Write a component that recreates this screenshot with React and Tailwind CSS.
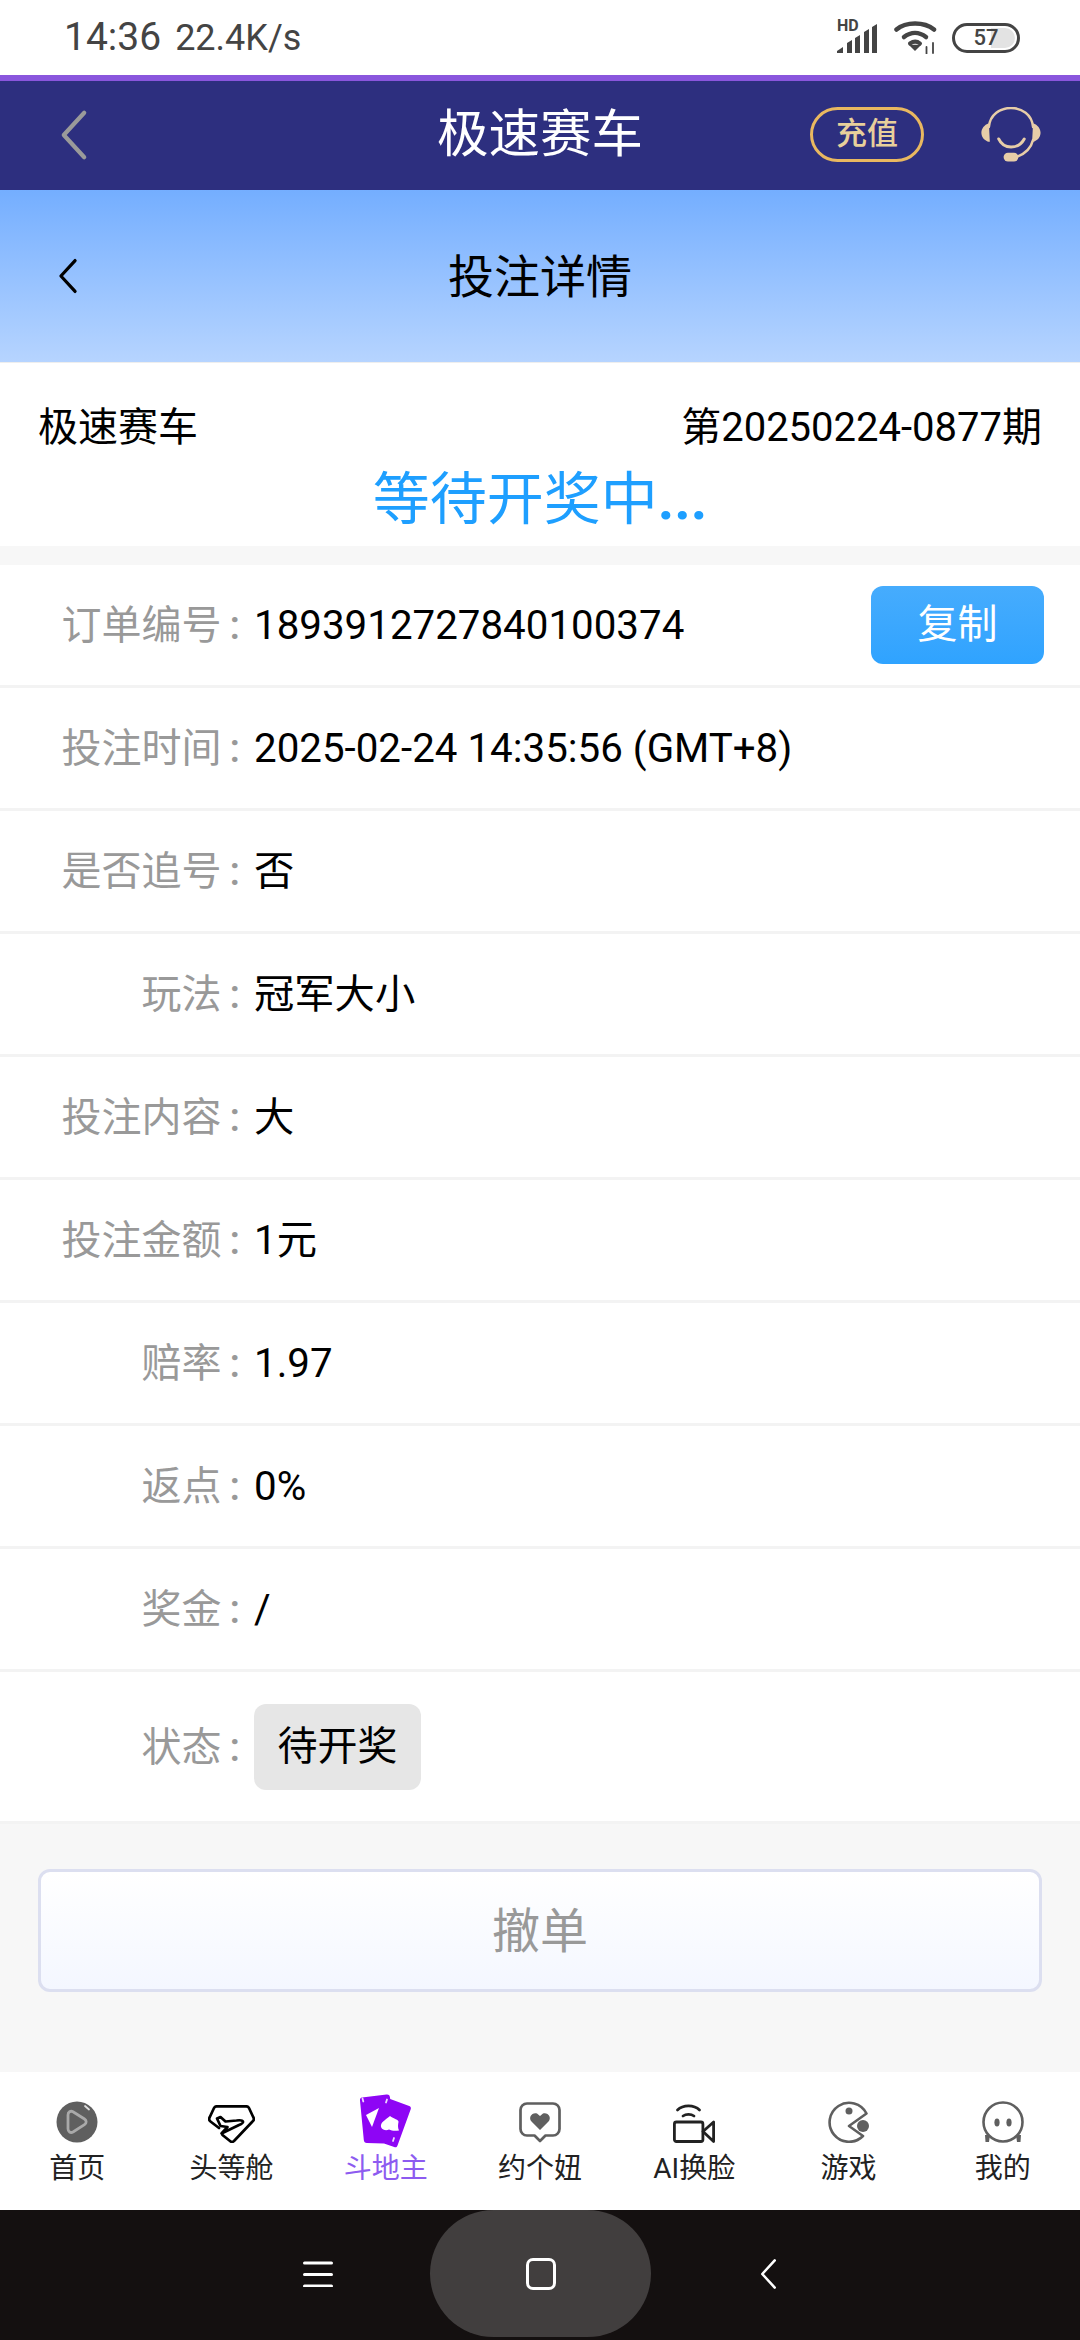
const CJK = "font-['Roboto','Noto_Sans_CJK_SC',sans-serif]";

const rows = [
  ['订单编号', '1893912727840100374', true],
  ['投注时间', '2025-02-24 14:35:56 (GMT+8)'],
  ['是否追号', '否'],
  ['玩法', '冠军大小'],
  ['投注内容', '大'],
  ['投注金额', '1元'],
  ['赔率', '1.97'],
  ['返点', '0%'],
  ['奖金', '/'],
];

function Chevron({ className, stroke, width = 5 }) {
  return (
    <svg viewBox="0 0 30 56" className={className} fill="none" stroke={stroke} strokeWidth={width} strokeLinecap="round" strokeLinejoin="round">
      <path d="M26 4 4 28l22 24" />
    </svg>
  );
}

function Label({ text }) {
  return (
    <div className="w-[240px] shrink-0 pt-[2px] text-right text-[40px] text-[#999999]">
      {text}
      <span className="ml-[8px] font-medium">:</span>
    </div>
  );
}

function Row({ label, value, copy }) {
  return (
    <div className="flex h-[123px] items-center border-b-[3px] border-[#f3f3f3] bg-white">
      <Label text={label} />
      <div className="ml-[14px] flex-1 pt-[2px] text-[40.3px] text-black">{value}</div>
      {copy && (
        <div className="mr-[36px] flex h-[78px] w-[173px] items-center justify-center rounded-xl bg-gradient-to-b from-[#46acfd] to-[#2fa3ff] text-[40px] text-white">复制</div>
      )}
    </div>
  );
}

const TabIcons = {
  home: (
    <svg viewBox="0 0 42 42" className="h-[42px] w-[42px]">
      <circle cx="21" cy="21" r="20.5" fill="#5f5f5f" />
      <path d="M12 14c0-3 2.500-4.500 5-3.300l11.500 7.300c2.200 1.400 2.200 4.200 0 5.600L17 31c-2.500 1.300-5-.3-5-3.300z" fill="none" stroke="#a9a9a9" strokeWidth="2.800" />
      <path d="M29 5l4 3.500" stroke="#e0e0e0" strokeWidth="1.800" strokeLinecap="round" />
    </svg>
  ),
  plane: (
    <svg viewBox="0 0 47 38" className="h-[38px] w-[47px]" fill="none" stroke="#000" strokeWidth="2.700" strokeLinejoin="round" strokeLinecap="round">
      <path d="M11 23 2.500 16.500c-1.500-1.200-1.700-2.800-.8-4.200L6 3c.6-1.200 1.400-1.700 2.700-1.700h29.600c1.300 0 2.100.5 2.700 1.700l4.300 9.300c.9 1.400.7 3-.8 4.200L26 36c-1.400 1.300-2.600 1.300-4 0l-7.500-6" />
      <path d="M9 13.500l3.500-1.500 5 4.500 11-1c3.500-.5 6-.3 6.500 1s-1.500 2.500-4.500 3.700l-17 8.300 6-6.500-7-1z" fill="#fff" />
    </svg>
  ),
  cards: (
    <svg viewBox="0 0 53 54" className="h-[54px] w-[53px]">
      <path d="M3 3.500 27.500.6c2-.2 3 .6 3.400 2.400l.3 2 19 7c1.500.6 2 1.700 1.500 3.200L38.500 51.500c-.6 1.700-1.800 2.200-3.300 1.600L25 49.500 8 49c-2 0-3-1-3.200-3L1 6.500C.8 4.700 1.500 3.700 3 3.500z" fill="#8e05f5" />
      <path d="M7 21 20 14l-7 19z" fill="#fff" />
      <path d="M31 22c-3 3-8 5-9 9-.8 4 4 6.500 8 4.500 3 1.500 6 1.500 10 1-1.500-3-1-6-.5-8.500.5-2.500-5-3-8.500-6z" fill="#fff" />
      <path d="M3.500 4.500l.8 3M28 5.500l-1 3M35 44l-1 3" stroke="#fff" strokeWidth="1.800" strokeLinecap="round" opacity=".85" />
    </svg>
  ),
  heart: (
    <svg viewBox="0 0 42 41" className="h-[41px] w-[42px]" fill="none">
      <path d="M8 1.500h26A6.500 6.500 0 0 1 40.500 8v19a6.500 6.500 0 0 1-6.500 6.500h-7.500L21 39l-5.500-5.500H8A6.500 6.500 0 0 1 1.500 27V8A6.500 6.500 0 0 1 8 1.500z" stroke="#5f5f5f" strokeWidth="2.700" strokeLinejoin="round" />
      <path d="M21 28 12.500 19.500c-3.500-4 .5-9.500 5.500-8l3 2.500 3-2.500c5-1.500 9 4 5.500 8z" fill="#5f5f5f" />
    </svg>
  ),
  faceswap: (
    <svg viewBox="0 0 42 39" className="h-[39px] w-[42px]" fill="none" stroke="#222" strokeWidth="2.800" strokeLinecap="round" strokeLinejoin="round">
      <path d="M4.500 6C10 .5 21 .5 26.500 6" />
      <path d="M10 12c3-2.300 8-2.300 11 0" />
      <rect x="1.400" y="18" width="28.500" height="19.500" rx="2" />
      <path d="M30 27.500 40.600 18v19.500z" />
    </svg>
  ),
  game: (
    <svg viewBox="0 0 42 42" className="h-[42px] w-[42px]">
      <path d="M38.500 12.500A19.500 19.500 0 1 0 35 35L21 25z" fill="none" stroke="#5f5f5f" strokeWidth="2.600" strokeLinejoin="round" />
      <circle cx="21" cy="10" r="3.500" fill="#5f5f5f" />
      <circle cx="35" cy="25" r="6" fill="#5f5f5f" />
    </svg>
  ),
  me: (
    <svg viewBox="0 0 42 42" className="h-[42px] w-[42px]">
      <circle cx="21" cy="21" r="19.500" fill="none" stroke="#5f5f5f" strokeWidth="2.600" />
      <ellipse cx="15" cy="21.500" rx="2.600" ry="4" fill="#5f5f5f" />
      <ellipse cx="27" cy="21.500" rx="2.600" ry="4" fill="#5f5f5f" />
      <path d="M3 34h5l-1 7H3.500zM34 34h5l-.5 7H35z" fill="#5f5f5f" />
    </svg>
  ),
};

const tabs = [
  ['首页', 'home'],
  ['头等舱', 'plane'],
  ['斗地主', 'cards', true],
  ['约个妞', 'heart'],
  ['AI换脸', 'faceswap'],
  ['游戏', 'game'],
  ['我的', 'me'],
];

export default function App() {
  return (
    <div className={`flex h-[2340px] w-[1080px] flex-col overflow-hidden bg-[#f7f7f7] ${CJK}`}>
      {/* status bar */}
      <div className="flex h-[75px] items-center justify-between bg-white pl-[64px] pr-[60px]">
        <div className="flex items-baseline text-[#444444]">
          <span className="text-[39px]">14:36</span>
          <span className="ml-[14px] text-[36px]">22.4K/s</span>
        </div>
        <div className="flex items-center">
          <div className="relative h-[33px] w-[41px]">
            <span className="absolute left-0 top-[-3px] text-[16px] font-bold leading-[16px] text-[#444444]">HD</span>
            <svg viewBox="0 0 41 30" className="absolute left-0 top-[3px] h-[30px] w-[41px]" fill="#444444">
              <path d="M0 29v-2l6-4v6zM10 29V19l5-3v13zM18 29V14l5-3v18zM27 29V8l5-3v24zM35 29V3l5-3v29z" />
            </svg>
          </div>
          <svg viewBox="0 0 43 33" className="ml-[16px] h-[33px] w-[43px]" fill="none" stroke="#444444" strokeWidth="4.500" strokeLinecap="round">
            <path d="M2.500 8.500C12 .5 30 .5 40 8.500" />
            <path d="M10 16c7-5.500 15-5.500 22 0" />
            <path d="M16 22.500c3.500-2.500 7-2.500 10 0" strokeWidth="4" />
            <path d="M16.500 24.500h9L21 29z" fill="#444444" stroke="#444444" strokeWidth="1.500" />
            <path d="M32.500 26v7M39 22v10" strokeWidth="1.800" />
          </svg>
          <div className="relative ml-[15px] flex h-[30px] w-[68px] items-center justify-center overflow-hidden rounded-full border-[3px] border-[#444444]">
            <div className="absolute inset-y-[2px] right-[2px] w-[24px] rounded-r-full bg-[#e3e3e3]" />
            <span className="relative text-[22px] font-medium leading-none text-[#444444]">57</span>
          </div>
        </div>
      </div>
      {/* top app bar */}
      <div className="flex h-[115px] items-center justify-between border-t-[6px] border-[#8a56dd] bg-[#2d2f7f] pb-[2px]">
        <div className="flex w-[270px] pl-[60px]">
          <Chevron className="h-[52px] w-[28px]" stroke="#9a9a9a" width="4.5" />
        </div>
        <div className="pt-[1px] text-[51.5px] text-white">极速赛车</div>
        <div className="flex w-[270px] items-center justify-end pr-[39px]">
          <div className="flex h-[55px] w-[116px] items-center justify-center rounded-full border-[3px] border-[#e9b860] text-[31px] font-medium text-[#e8cf9b]">充值</div>
          <svg viewBox="0 0 61 55" className="ml-[57px] h-[55px] w-[61px]" fill="none" stroke="#e7cda8" strokeLinecap="round">
            <path d="M8 20C10 -6 51 -6 53 20" strokeWidth="2.500" />
            <path d="M8 16C2 18 -1 24 1 29c1 3 5 6 8 6z" fill="#e7cda8" stroke="none" />
            <path d="M53 16c6 2 9 8 7 13-1 3-5 6-8 6z" fill="#e7cda8" stroke="none" />
            <path d="M18 32c5 11 20 11 26 0" strokeWidth="3" />
            <path d="M53 33c-2 8-8 14-16 17" strokeWidth="2.500" />
            <rect x="23" y="46" width="15" height="9" rx="4.500" fill="#e7cda8" stroke="none" />
          </svg>
        </div>
      </div>
      {/* page title */}
      <div className="flex h-[172px] items-center bg-gradient-to-b from-[#74aeff] to-[#b6d4ff]">
        <div className="flex w-[250px] pl-[58px]">
          <Chevron className="h-[36px] w-[20px]" stroke="#000" width="5" />
        </div>
        <div className="flex-1 pt-[2px] text-center text-[46px] text-black">投注详情</div>
        <div className="w-[250px]" />
      </div>
      {/* summary */}
      <div className="h-[184px] border-t border-[#eeeeee] bg-white px-[38px] pt-[41px]">
        <div className="flex items-center justify-between text-[40px] leading-[48px] text-black">
          <span>极速赛车</span>
          <span>第20250224-0877期</span>
        </div>
        <div className="mt-[14px] text-center text-[57px] leading-[68px] text-[#1e9fff]">
          等待开奖中<span className="font-bold">...</span>
        </div>
      </div>
      {/* details */}
      <div className="mt-[19px]">
        {rows.map(([l, v, c]) => (
          <Row key={l} label={l} value={v} copy={c} />
        ))}
        <div className="flex h-[152px] items-center border-b-[3px] border-[#f3f3f3] bg-white">
          <Label text="状态" />
          <div className="ml-[14px] flex h-[86px] w-[167px] items-center justify-center rounded-xl bg-[#e6e6e6] text-[40px] text-black">待开奖</div>
        </div>
      </div>
      {/* cancel */}
      <div className="flex-1 px-[38px] pt-[45px]">
        <div className="flex h-[123px] items-center justify-center rounded-xl border-[3px] border-[#dcdff0] bg-gradient-to-b from-white to-[#f4f7ff] pt-[3px] text-[48px] text-[#999999]">撤单</div>
      </div>
      {/* tab bar */}
      <div className="grid h-[138px] grid-cols-7 bg-white">
        {tabs.map(([label, icon, active]) => (
          <div key={label} className="flex flex-col items-center">
            <div className={`flex h-[84px] items-end justify-center ${active ? 'pb-[8px]' : 'pb-[13px]'}`}>{TabIcons[icon]}</div>
            <div className={`-mt-[3px] text-[28px] leading-[32px] ${active ? 'text-[#8d5bf0]' : 'text-[#222222]'}`}>{label}</div>
          </div>
        ))}
      </div>
      {/* system nav */}
      <div className="flex h-[130px] items-start justify-center bg-[#141010]">
        <div className="flex h-[127px] items-center">
          <svg viewBox="0 0 30 26" className="h-[26px] w-[30px]" stroke="#fff" strokeWidth="3" strokeLinecap="round">
            <path d="M1.500 2h27M1.500 13.500h27M1.500 25h27" />
          </svg>
          <div className="ml-[97px] flex h-[127px] w-[221px] items-center justify-center rounded-[64px] bg-[#413e3e]">
            <div className="h-[32px] w-[30px] rounded-[7px] border-[3px] border-white" />
          </div>
          <div className="ml-[109px] flex">
            <Chevron className="h-[32px] w-[17px]" stroke="#fff" width="4.500" />
          </div>
        </div>
      </div>
    </div>
  );
}
